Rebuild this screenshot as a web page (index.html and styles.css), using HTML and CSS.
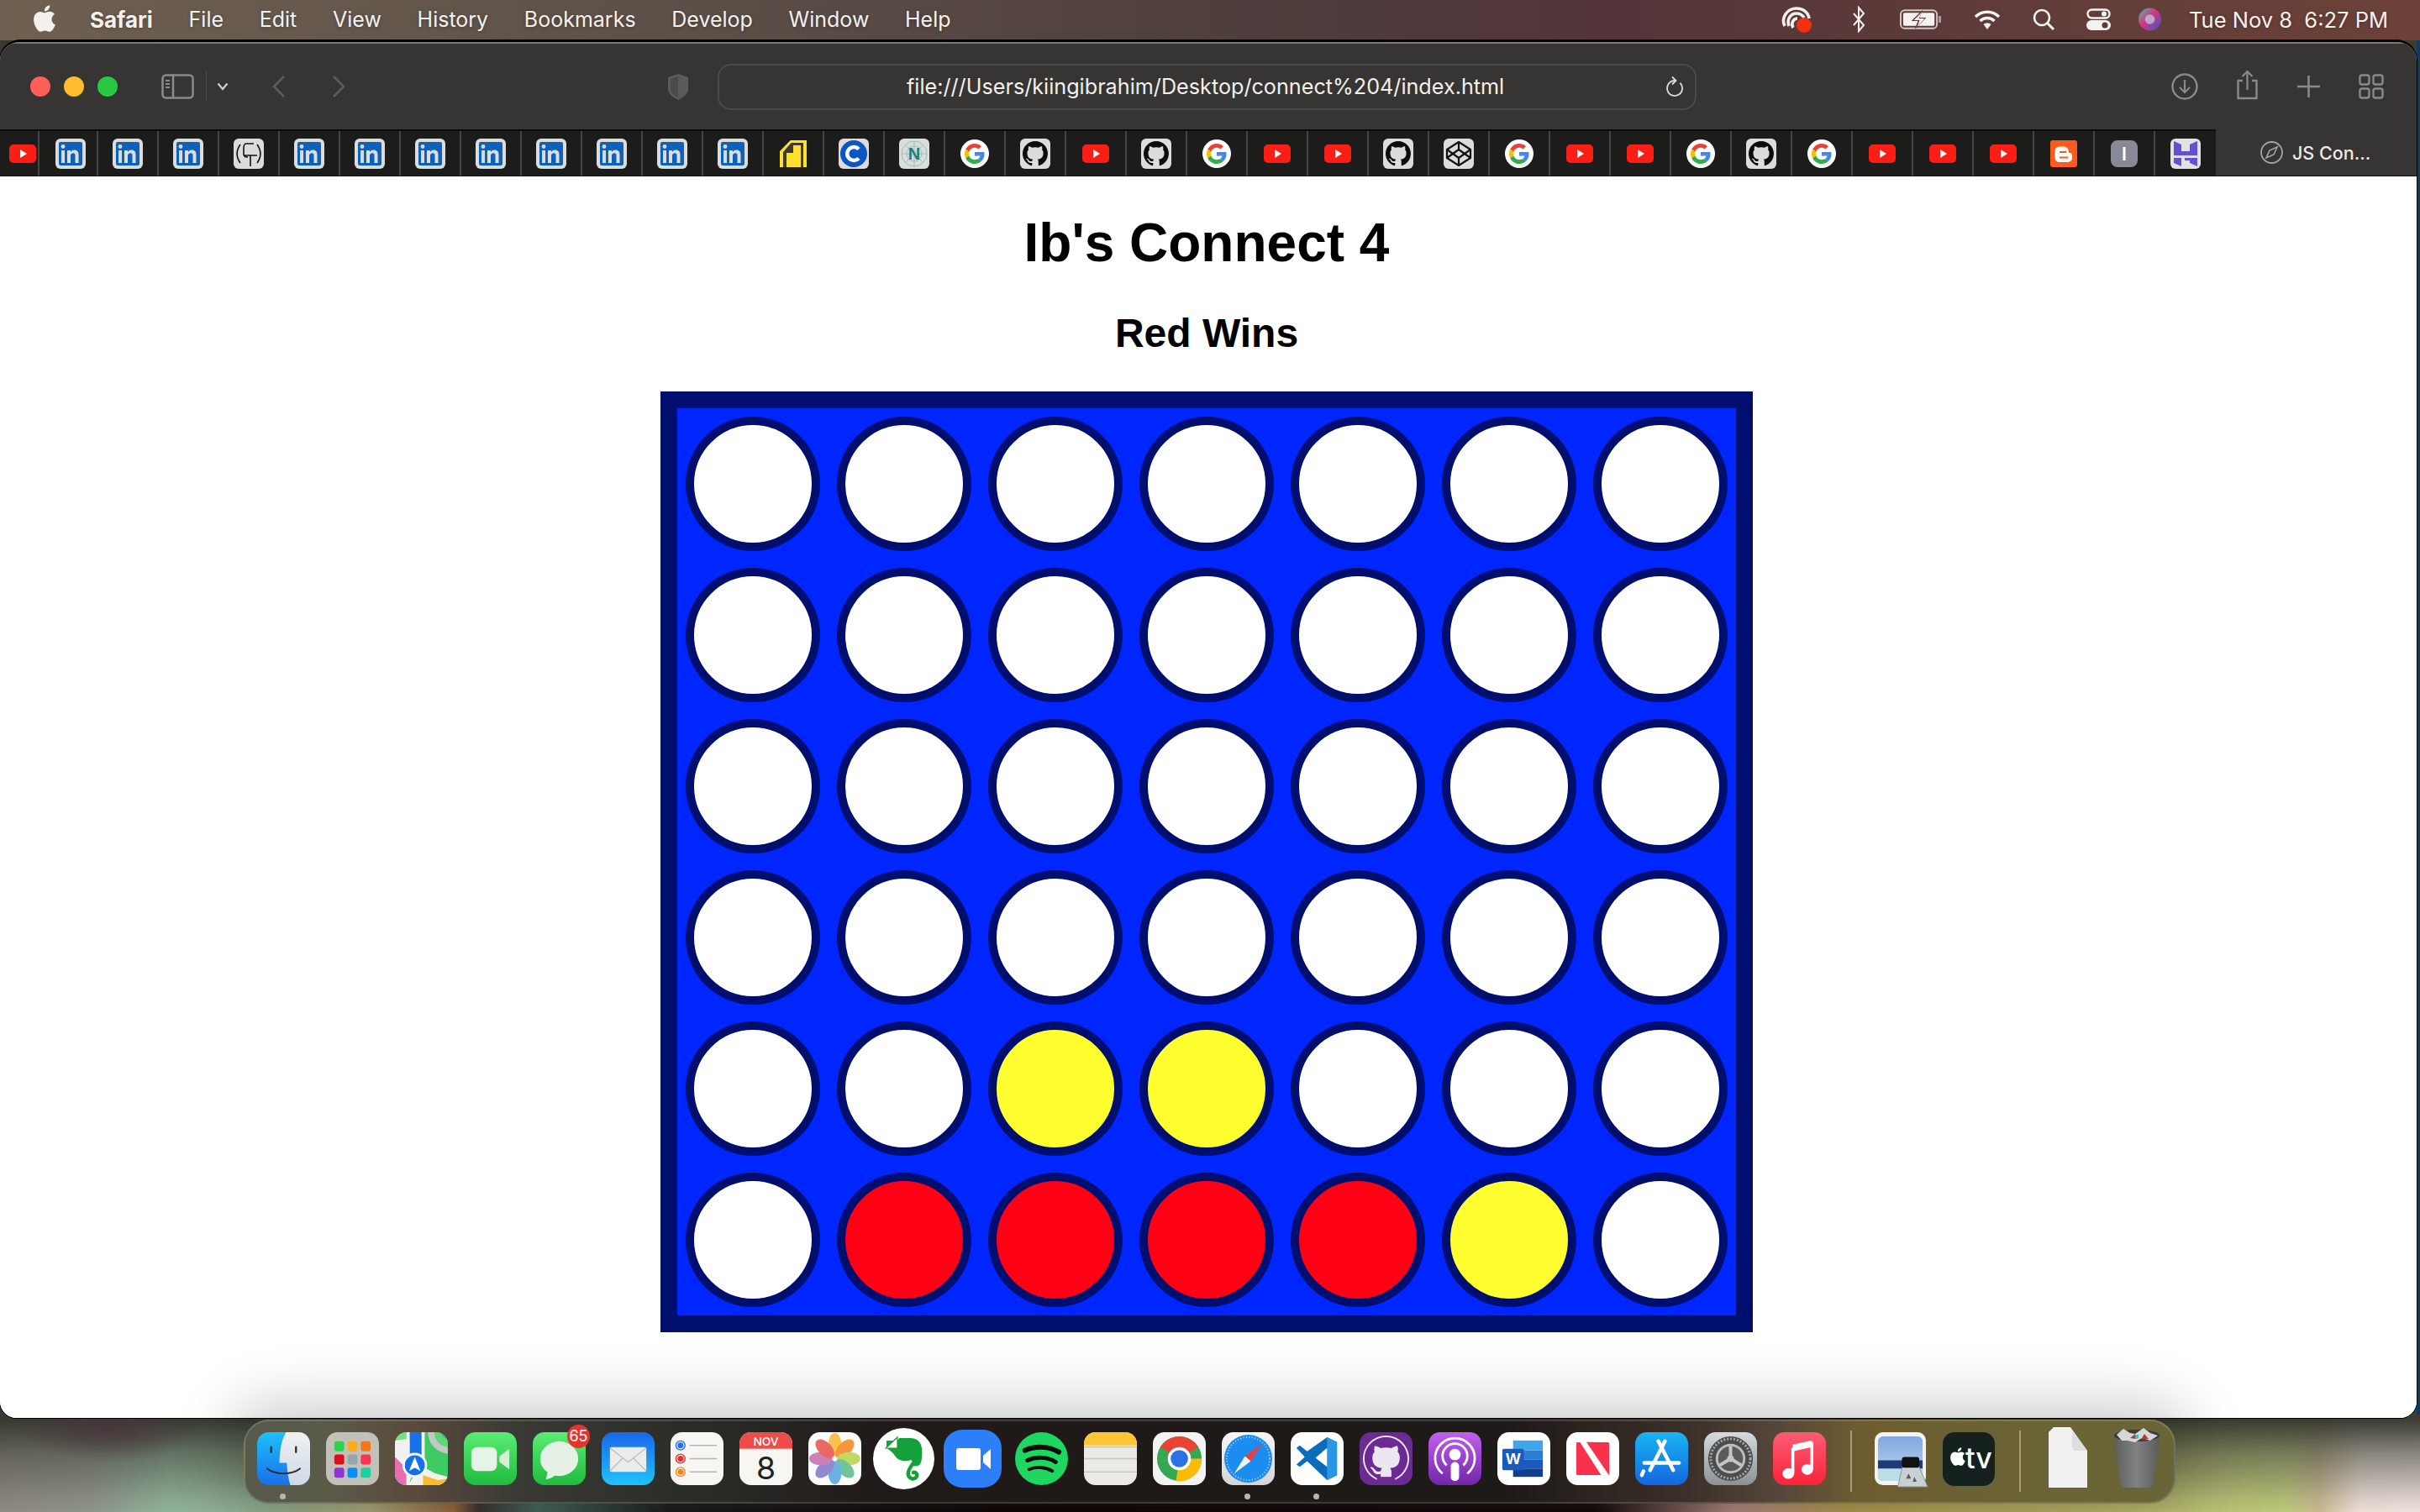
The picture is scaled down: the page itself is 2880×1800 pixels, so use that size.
FILE: index.html
```html
<!DOCTYPE html>
<html lang="en">
<head>
<meta charset="utf-8">
<title>Ib's Connect 4</title>
<link rel="stylesheet" href="styles.css">
</head>
<body>
<svg class="sprites" aria-hidden="true">
  <defs>
    <symbol id="apple" viewBox="0 0 24 24"><path d="M18.71 19.5c-.83 1.24-1.71 2.45-3.05 2.47-1.34.03-1.77-.79-3.29-.79-1.53 0-2 .77-3.27.82-1.31.05-2.3-1.32-3.14-2.53C4.25 17 2.94 12.45 4.7 9.39c.87-1.52 2.43-2.48 4.12-2.51 1.28-.02 2.5.87 3.29.87.78 0 2.26-1.07 3.8-.91.65.03 2.47.26 3.64 1.98-.09.06-2.17 1.28-2.15 3.81.03 3.02 2.65 4.03 2.68 4.04-.03.07-.42 1.44-1.38 2.83M13 3.5c.73-.83 1.94-1.46 2.94-1.5.13 1.17-.34 2.35-1.04 3.19-.69.85-1.83 1.51-2.95 1.42-.15-1.15.41-2.35 1.05-3.11z"/></symbol>
    <symbol id="octo" viewBox="0 0 16 16"><path d="M8 0C3.58 0 0 3.58 0 8c0 3.54 2.29 6.53 5.47 7.59.4.07.55-.17.55-.38 0-.19-.01-.82-.01-1.49-2.01.37-2.53-.49-2.69-.94-.09-.23-.48-.94-.82-1.13-.28-.15-.68-.52-.01-.53.63-.01 1.08.58 1.23.82.72 1.21 1.87.87 2.33.66.07-.52.28-.87.51-1.07-1.78-.2-3.64-.89-3.64-3.95 0-.87.31-1.59.82-2.15-.08-.2-.36-1.02.08-2.12 0 0 .67-.21 2.2.82.64-.18 1.32-.27 2-.27.68 0 1.36.09 2 .27 1.53-1.04 2.2-.82 2.2-.82.44 1.1.16 1.92.08 2.12.51.56.82 1.27.82 2.15 0 3.07-1.87 3.75-3.65 3.95.29.25.54.73.54 1.48 0 1.07-.01 1.93-.01 2.2 0 .21.15.46.55.38A8.013 8.013 0 0016 8c0-4.42-3.58-8-8-8z"/></symbol>
    <symbol id="t-yt" viewBox="0 0 36 36"><rect x="2" y="7" width="32" height="22" rx="5" fill="#fa1e14"/><path d="M15 13l8 5-8 5z" fill="#fff"/></symbol>
    <symbol id="t-in" viewBox="0 0 36 36"><rect width="36" height="36" rx="6" fill="#dcdcdc"/><rect x="4" y="4" width="28" height="28" rx="2" fill="#0b62b8"/><rect x="7" y="14" width="4" height="15" fill="#dcdcdc"/><circle cx="9" cy="9.5" r="2.4" fill="#dcdcdc"/><path d="M14 29V14h4v2c1-1.6 2.600-2.400 4.500-2.400 3.500 0 5 2.300 5 5.800V29h-4v-8.800c0-1.900-.7-3-2.300-3-1.900 0-3.200 1.300-3.200 3.400V29z" fill="#dcdcdc"/></symbol>
    <symbol id="t-gt" viewBox="0 0 36 36"><rect width="36" height="36" rx="6" fill="#dcdcdc"/><g fill="none" stroke="#111" stroke-width="1.600"><path d="M8 7C3 14 3 22 8 29M28 7c5 7 5 15 0 22"/><path d="M24 6H15c-3 0-3 3-3 6v6c0 3 2 4 4 4h1M13 20h15M20 20v13"/></g></symbol>
    <symbol id="t-y" viewBox="0 0 36 36"><path d="M14.700 2H34v32H2V15z" fill="#ffe030"/><path d="M15.500 5H30v29H6V16z" fill="#3a3a36"/><path d="M18 8h9v26H10V17h8z" fill="#ffe030"/></symbol>
    <symbol id="t-c" viewBox="0 0 36 36"><rect width="36" height="36" rx="6" fill="#dcdcdc"/><circle cx="18" cy="18" r="16" fill="#0a56c8"/><path d="M24 12.500a8 8 0 1 0 0 11" fill="none" stroke="#fff" stroke-width="4.500"/></symbol>
    <symbol id="t-n" viewBox="0 0 36 36"><rect width="36" height="36" rx="6" fill="#dcdcdc"/><g fill="none" stroke="#7fb5ad" stroke-width=".7"><circle cx="18" cy="18" r="15"/><circle cx="18" cy="18" r="9"/><path d="M3 18h30M18 3v30M8 8l20 20M28 8L8 28"/></g><text x="18" y="25" class="tile-letter" fill="#1d7f76">N</text></symbol>
    <symbol id="t-g" viewBox="0 0 36 36"><circle cx="18" cy="18" r="17" fill="#fff"/><g transform="translate(6 6) scale(.5)"><path fill="#EA4335" d="M24 9.500c3.540 0 6.710 1.220 9.210 3.600l6.850-6.850C35.900 2.380 30.470 0 24 0 14.620 0 6.510 5.380 2.560 13.220l7.980 6.190C12.430 13.720 17.740 9.500 24 9.500z"/><path fill="#4285F4" d="M46.980 24.550c0-1.570-.15-3.090-.38-4.550H24v9.020h12.940c-.58 2.960-2.260 5.480-4.780 7.180l7.730 6c4.510-4.180 7.090-10.360 7.090-17.65z"/><path fill="#FBBC05" d="M10.530 28.590c-.48-1.450-.76-2.990-.76-4.590s.27-3.140.76-4.590l-7.980-6.190C.92 16.460 0 20.120 0 24c0 3.880.92 7.540 2.560 10.780l7.970-6.190z"/><path fill="#34A853" d="M24 48c6.480 0 11.930-2.130 16.010-5.810l-7.730-6c-2.150 1.450-4.920 2.300-8.280 2.300-6.260 0-11.570-4.220-13.470-9.910l-7.980 6.190C6.510 42.620 14.620 48 24 48z"/></g></symbol>
    <symbol id="t-gh" viewBox="0 0 36 36"><rect width="36" height="36" rx="6" fill="#dcdcdc"/><use href="#octo" x="3" y="3" width="30" height="30" fill="#0c0c0c"/></symbol>
    <symbol id="t-cp" viewBox="0 0 36 36"><rect width="36" height="36" rx="6" fill="#dcdcdc"/><g fill="none" stroke="#111" stroke-width="2.200" stroke-linejoin="round"><path d="M18 4l14 9v10l-14 9-14-9V13z"/><path d="M18 4v9M18 23v9M4 13l14 10 14-10M4 23l14-10 14 10"/></g></symbol>
    <symbol id="t-b" viewBox="0 0 36 36"><rect x="2" y="2" width="32" height="32" rx="3" fill="#f95b1d"/><path d="M13 9.500h5a6 6 0 0 1 6 6V17h1a3 3 0 0 1 3 3v3a5 5 0 0 1-5 5H13a5.500 5.500 0 0 1-5.500-5.500V15a5.500 5.500 0 0 1 5.500-5.500z" fill="#fff"/><rect x="13" y="15" width="8" height="2" fill="#f95b1d"/><rect x="13" y="21.500" width="10" height="2" fill="#f95b1d"/></symbol>
    <symbol id="t-i" viewBox="0 0 36 36"><rect x="2" y="2" width="32" height="32" rx="8" fill="#878a96"/><rect x="16.500" y="10" width="3" height="16" fill="#fff"/></symbol>
    <symbol id="t-h" viewBox="0 0 36 36"><rect width="36" height="36" rx="6" fill="#e2e2e2"/><path d="M4 3l9 4v8h10V7l9-4v17H4zM4 23h9v10l-9-4zM17 23h15v10l-9-4v-3h-6z" fill="#6351cf"/></symbol>
  </defs>
</svg>

<header class="menubar">
  <nav class="menu">
    <svg class="apple"><use href="#apple"/></svg>
    <span class="menu-app">Safari</span>
    <span>File</span><span>Edit</span><span>View</span><span>History</span><span>Bookmarks</span><span>Develop</span><span>Window</span><span>Help</span>
  </nav>
  <div class="status">
    <svg class="st st-cc" viewBox="0 0 40 32"><g fill="none" stroke="#f2f0ee" stroke-width="3.600"><path d="M5 24C0 14 8 3 19 3c8 0 14 5 15 12"/><path d="M10 24C7 16 12 9 19 9c4 0 7 2 9 5"/><path d="M15 26c-3-5 0-11 5-11"/></g><circle cx="28" cy="23" r="9" fill="#f0300f"/></svg>
    <svg class="st st-bt" viewBox="0 0 16 32"><path d="M2 9l12 14-6 7V2l6 7L2 23" fill="none" stroke="#f2f0ee" stroke-width="2"/></svg>
    <svg class="st st-bat" viewBox="0 0 52 24"><rect x="1" y="1" width="44" height="22" rx="5" fill="none" stroke="#cfc9c6" stroke-width="2"/><rect x="47" y="8" width="3" height="8" rx="1" fill="#a89f9b"/><rect x="4" y="4" width="38" height="16" rx="2" fill="#f4f2f0"/><path d="M28 0L14 14h8l-4 10 14-14h-8z" fill="#5f3936"/><path d="M27 3L17 13h7l-3 8 9-10h-7z" fill="#f4f2f0"/></svg>
    <svg class="st st-wifi" viewBox="0 0 32 24"><g fill="none" stroke="#f4f2f0" stroke-width="3.400"><path d="M2 9a20 20 0 0 1 28 0"/><path d="M7.500 14a12 12 0 0 1 17 0"/></g><path d="M11.500 18a6.500 6.500 0 0 1 9 0L16 24z" fill="#f4f2f0"/></svg>
    <svg class="st st-search" viewBox="0 0 27 26"><circle cx="11" cy="11" r="9" fill="none" stroke="#f4f2f0" stroke-width="2.600"/><path d="M17.500 17.500L25 25" stroke="#f4f2f0" stroke-width="3"/></svg>
    <svg class="st st-ctl" viewBox="0 0 29 26"><rect x="1.500" y="1.500" width="26" height="10" rx="5" fill="none" stroke="#f4f2f0" stroke-width="2.400"/><circle cx="21" cy="6.500" r="3" fill="#f4f2f0"/><rect y="14" width="29" height="12" rx="6" fill="#f4f2f0"/><circle cx="22" cy="20" r="3.500" fill="#5f3936"/></svg>
    <svg class="st st-siri" viewBox="0 0 28 28"><defs><linearGradient id="siri" x1="0" y1="0" x2="1" y2="1"><stop offset="0" stop-color="#38c7b0"/><stop offset=".45" stop-color="#d9337f"/><stop offset="1" stop-color="#2a5fc9"/></linearGradient></defs><circle cx="14" cy="14" r="14" fill="url(#siri)"/><circle cx="14" cy="14" r="6" fill="#b9d6e6" opacity=".7"/></svg>
    <span class="clock">Tue Nov 8&nbsp; 6:27 PM</span>
  </div>
</header>

<main class="window">
  <div class="toolbar">
    <div class="lights"><i class="light l-red"></i><i class="light l-yellow"></i><i class="light l-green"></i></div>
    <svg class="tb tb-side" viewBox="0 0 39 30"><rect x="1.500" y="1.500" width="36" height="27" rx="4" fill="none" stroke="#8b8a88" stroke-width="2.500"/><path d="M14 2v26" stroke="#8b8a88" stroke-width="2.500"/><path d="M5 8h5M5 12h5M5 16h5" stroke="#8b8a88" stroke-width="2"/></svg>
    <i class="tb-sep"></i>
    <svg class="tb tb-chev" viewBox="0 0 14 10"><path d="M1.500 1.500L7 8l5.500-6.500" fill="none" stroke="#cfcecc" stroke-width="2.200"/></svg>
    <svg class="tb tb-back" viewBox="0 0 17 28"><path d="M15 2L3 14l12 12" fill="none" stroke="#5d5c5a" stroke-width="2.600"/></svg>
    <svg class="tb tb-fwd" viewBox="0 0 17 28"><path d="M2 2l12 12L2 26" fill="none" stroke="#5d5c5a" stroke-width="2.600"/></svg>
    <svg class="tb tb-shield" viewBox="0 0 26 33"><path d="M13 1l12 4v14c0 6-6 10-12 13C7 29 1 25 1 19V5z" fill="#5a5a58"/><path d="M13 4v25c-4-2-9-5-9-10V7z" fill="#4a4a48"/></svg>
    <div class="address">
      <span class="url">file:///Users/kiingibrahim/Desktop/connect%204/index.html</span>
      <svg class="reload" viewBox="0 0 20 26"><path d="M10 6A9 9 0 1 0 16.400 8.600" fill="none" stroke="#dddcda" stroke-width="1.800"/><path d="M7 1.500L11.500 6 7 10.500" fill="none" stroke="#dddcda" stroke-width="1.800"/></svg>
    </div>
    <svg class="tb tb-dl" viewBox="0 0 32 32"><circle cx="16" cy="16" r="14.500" fill="none" stroke="#8b8a88" stroke-width="2.400"/><path d="M16 8v15M10 17l6 6 6-6" fill="none" stroke="#8b8a88" stroke-width="2.200"/></svg>
    <svg class="tb tb-share" viewBox="0 0 27 36"><path d="M8 13H2.500v21h22V13H19" fill="none" stroke="#8b8a88" stroke-width="2.400" stroke-linejoin="round"/><path d="M13.500 24V2M7.500 8l6-6 6 6" fill="none" stroke="#8b8a88" stroke-width="2.200"/></svg>
    <svg class="tb tb-plus" viewBox="0 0 27 26"><path d="M13.500 0v26M0 13h27" stroke="#8b8a88" stroke-width="2.600"/></svg>
    <svg class="tb tb-grid" viewBox="0 0 30 30"><g fill="none" stroke="#8b8a88" stroke-width="2.400"><rect x="1.500" y="1.500" width="11" height="11" rx="2.500"/><rect x="17.500" y="1.500" width="11" height="11" rx="2.500"/><rect x="1.500" y="17.500" width="11" height="11" rx="2.500"/><rect x="17.500" y="17.500" width="11" height="11" rx="2.500"/></g></svg>
  </div>

  <div class="tabbar">
    <div class="tabs">
      <div class="tab tab-first"><svg class="fav"><use href="#t-yt"/></svg></div>
      <div class="tab tab-second"><svg class="fav"><use href="#t-in"/></svg></div>
      <div class="tab"><svg class="fav"><use href="#t-in"/></svg></div>
      <div class="tab"><svg class="fav"><use href="#t-in"/></svg></div>
      <div class="tab"><svg class="fav"><use href="#t-gt"/></svg></div>
      <div class="tab"><svg class="fav"><use href="#t-in"/></svg></div>
      <div class="tab"><svg class="fav"><use href="#t-in"/></svg></div>
      <div class="tab"><svg class="fav"><use href="#t-in"/></svg></div>
      <div class="tab"><svg class="fav"><use href="#t-in"/></svg></div>
      <div class="tab"><svg class="fav"><use href="#t-in"/></svg></div>
      <div class="tab"><svg class="fav"><use href="#t-in"/></svg></div>
      <div class="tab"><svg class="fav"><use href="#t-in"/></svg></div>
      <div class="tab"><svg class="fav"><use href="#t-in"/></svg></div>
      <div class="tab"><svg class="fav"><use href="#t-y"/></svg></div>
      <div class="tab"><svg class="fav"><use href="#t-c"/></svg></div>
      <div class="tab"><svg class="fav"><use href="#t-n"/></svg></div>
      <div class="tab"><svg class="fav"><use href="#t-g"/></svg></div>
      <div class="tab"><svg class="fav"><use href="#t-gh"/></svg></div>
      <div class="tab"><svg class="fav"><use href="#t-yt"/></svg></div>
      <div class="tab"><svg class="fav"><use href="#t-gh"/></svg></div>
      <div class="tab"><svg class="fav"><use href="#t-g"/></svg></div>
      <div class="tab"><svg class="fav"><use href="#t-yt"/></svg></div>
      <div class="tab"><svg class="fav"><use href="#t-yt"/></svg></div>
      <div class="tab"><svg class="fav"><use href="#t-gh"/></svg></div>
      <div class="tab"><svg class="fav"><use href="#t-cp"/></svg></div>
      <div class="tab"><svg class="fav"><use href="#t-g"/></svg></div>
      <div class="tab"><svg class="fav"><use href="#t-yt"/></svg></div>
      <div class="tab"><svg class="fav"><use href="#t-yt"/></svg></div>
      <div class="tab"><svg class="fav"><use href="#t-g"/></svg></div>
      <div class="tab"><svg class="fav"><use href="#t-gh"/></svg></div>
      <div class="tab"><svg class="fav"><use href="#t-g"/></svg></div>
      <div class="tab"><svg class="fav"><use href="#t-yt"/></svg></div>
      <div class="tab"><svg class="fav"><use href="#t-yt"/></svg></div>
      <div class="tab"><svg class="fav"><use href="#t-yt"/></svg></div>
      <div class="tab"><svg class="fav"><use href="#t-b"/></svg></div>
      <div class="tab"><svg class="fav"><use href="#t-i"/></svg></div>
      <div class="tab"><svg class="fav"><use href="#t-h"/></svg></div>
    </div>
    <div class="tab-active">
      <svg class="compass" viewBox="0 0 27 27"><circle cx="13.500" cy="13.500" r="12.500" fill="none" stroke="#a5a4a2" stroke-width="1.800"/><path d="M20 7l-9 4-4 9 9-4z" fill="none" stroke="#a5a4a2" stroke-width="1.600"/></svg>
      <span>JS Con...</span>
    </div>
  </div>

  <section class="page">
    <h1 class="title">Ib's Connect 4</h1>
    <h2 class="status-line">Red Wins</h2>
    <div class="board">
      <div class="hole"></div><div class="hole"></div><div class="hole"></div><div class="hole"></div><div class="hole"></div><div class="hole"></div><div class="hole"></div>
      <div class="hole"></div><div class="hole"></div><div class="hole"></div><div class="hole"></div><div class="hole"></div><div class="hole"></div><div class="hole"></div>
      <div class="hole"></div><div class="hole"></div><div class="hole"></div><div class="hole"></div><div class="hole"></div><div class="hole"></div><div class="hole"></div>
      <div class="hole"></div><div class="hole"></div><div class="hole"></div><div class="hole"></div><div class="hole"></div><div class="hole"></div><div class="hole"></div>
      <div class="hole"></div><div class="hole"></div><div class="hole yellow"></div><div class="hole yellow"></div><div class="hole"></div><div class="hole"></div><div class="hole"></div>
      <div class="hole"></div><div class="hole red"></div><div class="hole red"></div><div class="hole red"></div><div class="hole red"></div><div class="hole yellow"></div><div class="hole"></div>
    </div>
  </section>
</main>

<footer class="dock">
  <div class="app running"><svg viewBox="0 0 64 64"><defs><linearGradient id="fa" x1="0" y1="0" x2="0" y2="1"><stop offset="0" stop-color="#1fc0fb"/><stop offset="1" stop-color="#1a6fe8"/></linearGradient><linearGradient id="fb" x1="0" y1="0" x2="0" y2="1"><stop offset="0" stop-color="#f0f1f3"/><stop offset="1" stop-color="#cfd9e6"/></linearGradient></defs><rect width="64" height="64" rx="14" fill="url(#fa)"/><path d="M35 0h15a14 14 0 0 1 14 14v36a14 14 0 0 1-14 14H40c-2-8-4-17-4-27h-9c0-15 3-29 8-37z" fill="url(#fb)"/><path d="M17 18v6M47 18v6" stroke="#2a3038" stroke-width="2.400" stroke-linecap="round"/><path d="M12 44c10 8 30 8 40 0" fill="none" stroke="#23282e" stroke-width="1.800" stroke-linecap="round"/></svg></div>
  <div class="app"><svg viewBox="0 0 64 64"><rect width="64" height="64" rx="14" fill="#c2c1b9"/><g><rect x="10" y="11" width="12" height="12" rx="3" fill="#33d04f"/><rect x="26" y="11" width="12" height="12" rx="3" fill="#fdab1d"/><rect x="42" y="11" width="12" height="12" rx="3" fill="#f07a1b"/><rect x="10" y="27" width="12" height="12" rx="3" fill="#d7121e"/><rect x="26" y="27" width="12" height="12" rx="3" fill="#98a6ac"/><rect x="42" y="27" width="12" height="12" rx="3" fill="#f9364f"/><rect x="10" y="43" width="12" height="12" rx="3" fill="#8e35d0"/><rect x="26" y="43" width="12" height="12" rx="3" fill="#0a8ef5"/><rect x="42" y="43" width="12" height="12" rx="3" fill="#1fcfa0"/></g></svg></div>
  <div class="app"><svg viewBox="0 0 64 64"><clipPath id="mc"><rect width="64" height="64" rx="14"/></clipPath><g clip-path="url(#mc)"><rect width="64" height="64" fill="#3ecb63"/><path d="M0 0h16v10L0 12z" fill="#6fe27f"/><path d="M0 10l16-2 14 22L16 64H0z" fill="#f1f1ef"/><path d="M0 30l14 14v20H0z" fill="#e56fb0"/><path d="M30 40l34 18v6H16z" fill="#f1f1ef"/><path d="M34 50h16l14 4v10H34z" fill="#f1f1ef"/><path d="M34 64V52l18 6 12-2v8z" fill="#f7bb2b"/><path d="M14 0h4v64h-4zM32 0h4v40h-4z" fill="#f1f1ef"/><path d="M18 0h14v36H18z" fill="#1572e8"/><path d="M40 0c0 14 10 24 24 26v-8C54 16 48 10 48 0z" fill="#c5c6c6"/><path d="M48 0c0 10 6 16 16 18V8C58 8 56 4 56 0z" fill="#5ed77a"/><circle cx="24" cy="40" r="15" fill="#f4f4f2"/><circle cx="24" cy="40" r="12" fill="#1170ea"/><path d="M24 30l7 17-7-4-7 4z" fill="#fff"/></g></svg></div>
  <div class="app"><svg viewBox="0 0 64 64"><defs><linearGradient id="fc" x1="0" y1="0" x2="0" y2="1"><stop offset="0" stop-color="#5bec74"/><stop offset="1" stop-color="#1fbb3f"/></linearGradient></defs><rect width="64" height="64" rx="14" fill="url(#fc)"/><rect x="9" y="18" width="31" height="29" rx="7" fill="#e8f3e8"/><path d="M43 29l12-9v25l-12-9z" fill="#d8ecd8"/></svg></div>
  <div class="app"><svg viewBox="0 0 64 64"><rect width="64" height="64" rx="14" fill="url(#fc)"/><ellipse cx="32" cy="32" rx="23" ry="21" fill="#e6f1e6"/><path d="M18 48l-2 9c6-1 10-3 13-7z" fill="#e6f1e6"/></svg><span class="badge">65</span></div>
  <div class="app"><svg viewBox="0 0 64 64"><defs><linearGradient id="ma" x1="0" y1="0" x2="0" y2="1"><stop offset="0" stop-color="#1a66e8"/><stop offset="1" stop-color="#1fc3fb"/></linearGradient></defs><rect width="64" height="64" rx="14" fill="url(#ma)"/><rect x="10" y="18" width="44" height="30" rx="2" fill="#ececec"/><path d="M10 19l22 17 22-17M10 47l16-16M54 47L38 31" fill="none" stroke="#bcbcbc" stroke-width="1.200"/></svg></div>
  <div class="app"><svg viewBox="0 0 64 64"><rect width="64" height="64" rx="14" fill="#f7f6f3"/><g fill="none" stroke-width="1.400"><circle cx="12" cy="16" r="5.500" stroke="#1672f0"/><circle cx="12" cy="32" r="5.500" stroke="#ee2b2b"/><circle cx="12" cy="48" r="5.500" stroke="#f6861c"/></g><circle cx="12" cy="16" r="3.500" fill="#1672f0"/><circle cx="12" cy="32" r="3.500" fill="#ee2b2b"/><circle cx="12" cy="48" r="3.500" fill="#f6861c"/><path d="M23 16h33M23 32h33M23 48h33" stroke="#b5b5b3" stroke-width="1.600"/></svg></div>
  <div class="app"><svg viewBox="0 0 64 64"><clipPath id="cc"><rect width="64" height="64" rx="14"/></clipPath><g clip-path="url(#cc)"><rect width="64" height="64" fill="#f7f6f3"/><rect width="64" height="20" fill="#ee4b4b"/></g><text x="32" y="16" class="cal-month">NOV</text><text x="32" y="57" class="cal-day">8</text></svg></div>
  <div class="app"><svg viewBox="0 0 64 64"><rect width="64" height="64" rx="14" fill="#fbfbfb"/><g transform="translate(32 32)" opacity=".85"><ellipse cy="-17" rx="8" ry="14" fill="#f8b830"/><ellipse cy="-17" rx="8" ry="14" fill="#f6861c" transform="rotate(45)"/><ellipse cy="-17" rx="8" ry="14" fill="#b8d34a" transform="rotate(90)"/><ellipse cy="-17" rx="8" ry="14" fill="#5bb98c" transform="rotate(135)"/><ellipse cy="-17" rx="8" ry="14" fill="#52a5dd" transform="rotate(180)"/><ellipse cy="-17" rx="8" ry="14" fill="#8176c7" transform="rotate(225)"/><ellipse cy="-17" rx="8" ry="14" fill="#c46bac" transform="rotate(270)"/><ellipse cy="-17" rx="8" ry="14" fill="#e84f48" transform="rotate(315)"/></g></svg></div>
  <div class="app app-wide"><svg viewBox="0 0 73 73"><circle cx="36.500" cy="36.500" r="36.500" fill="#fff"/><path d="M31 12h13c8 0 13 4 14 12 1 8 0 16-2 19-2 3-7 3-9 1l-1-6-5 1c-6 1-12-1-15-6-3-5-9-8-10-10v-8h11c2 0 4-2 4-3z" fill="#14a03a"/><path d="M47 43c-3 4-6 9-5 13 1 4 6 6 9 3 3-3 0-7-3-6" fill="none" stroke="#14a03a" stroke-width="4.500" stroke-linecap="round"/><path d="M15 24L29 11v13z" fill="#fff" stroke="#14a03a" stroke-width="1.200"/></svg></div>
  <div class="app app-zoom"><svg viewBox="0 0 69 69"><rect width="69" height="69" rx="22" fill="#2d7ff9"/><rect x="15" y="22" width="29" height="26" rx="3" fill="#fff"/><path d="M47 31l9-8v24l-9-8z" fill="#fff"/></svg></div>
  <div class="app"><svg viewBox="0 0 64 64"><ellipse cx="32" cy="32" rx="32" ry="32" fill="#1ed760"/><g fill="none" stroke="#0c0c0c" stroke-linecap="round"><path d="M12 22c13-6 29-5 41 2" stroke-width="6"/><path d="M15 34c11-5 25-4 34 2" stroke-width="5"/><path d="M17 45c9-4 20-3 28 2" stroke-width="4"/></g></svg></div>
  <div class="app"><svg viewBox="0 0 64 64"><clipPath id="nc"><rect width="64" height="64" rx="14"/></clipPath><g clip-path="url(#nc)"><rect width="64" height="64" fill="#eceae5"/><rect width="64" height="16" fill="#fcc635"/><path d="M0 18h64M0 32h64M0 48h64" stroke="#c9c7c2" stroke-width="1.400"/></g></svg></div>
  <div class="app"><svg viewBox="0 0 64 64"><rect width="64" height="64" rx="14" fill="#f3f3f3"/><circle cx="32" cy="32" r="27" fill="#34a853"/><path d="M32 32L9 18A27 27 0 0 1 55 18z" fill="#ea4335"/><path d="M32 32h27A27 27 0 0 1 28 59z" fill="#fbbc05"/><circle cx="32" cy="32" r="14" fill="#fff"/><circle cx="32" cy="32" r="10.500" fill="#2b72e6"/></svg></div>
  <div class="app running"><svg viewBox="0 0 64 64"><defs><linearGradient id="sa" x1="0" y1="0" x2="0" y2="1"><stop offset="0" stop-color="#f7f7f7"/><stop offset="1" stop-color="#d5d5d5"/></linearGradient></defs><rect width="64" height="64" rx="14" fill="url(#sa)"/><circle cx="32" cy="32" r="29" fill="#1c8df0"/><circle cx="32" cy="32" r="26" fill="none" stroke="#bcdcf7" stroke-width="2" stroke-dasharray="1 2.500"/><path d="M49 14L28 29l7 6z" fill="#f23c3c"/><path d="M15 50l13-21 7 6z" fill="#f2f2f2"/></svg></div>
  <div class="app running"><svg viewBox="0 0 64 64"><rect width="64" height="64" rx="14" fill="#fff"/><path d="M44 6l12 6v40l-12 6-24-23-9 7-4-3 10-9L7 19l4-3 9 7z" fill="#0a6dbb"/><path d="M44 6v52l12-6V12z" fill="#2a97e6"/><path d="M44 19L30 31l14 11z" fill="#fff"/></svg></div>
  <div class="app"><svg viewBox="0 0 64 64"><rect width="64" height="64" rx="14" fill="#6b2b93"/><circle cx="32" cy="32" r="28" fill="#ece6f0"/><use href="#octo" x="6" y="6" width="52" height="52" fill="#6b2b93"/><rect x="21" y="54" width="22" height="10" fill="#6b2b93"/></svg></div>
  <div class="app"><svg viewBox="0 0 64 64"><defs><linearGradient id="po" x1="0" y1="0" x2="0" y2="1"><stop offset="0" stop-color="#c260ee"/><stop offset="1" stop-color="#7027a8"/></linearGradient></defs><rect width="64" height="64" rx="14" fill="url(#po)"/><g fill="none" stroke="#fff" stroke-width="2.800"><path d="M17 50a24 24 0 1 1 30 0"/><path d="M22 40a15 15 0 1 1 20 0"/></g><circle cx="32" cy="27" r="7" fill="#fff"/><rect x="27" y="36" width="10" height="23" rx="5" fill="#fff"/></svg></div>
  <div class="app"><svg viewBox="0 0 64 64"><rect width="64" height="64" rx="14" fill="#fff"/><rect x="19" y="10" width="36" height="12" fill="#41a5ee"/><rect x="19" y="22" width="36" height="11" fill="#2b7cd3"/><rect x="19" y="33" width="36" height="11" fill="#185abd"/><rect x="19" y="44" width="36" height="10" fill="#103f91"/><rect x="6" y="20" width="26" height="26" rx="2" fill="#185abd"/><text x="19" y="39" class="word-letter">W</text></svg></div>
  <div class="app"><svg viewBox="0 0 64 64"><clipPath id="ne"><rect x="12" y="12" width="40" height="40" rx="2"/></clipPath><rect width="64" height="64" rx="14" fill="#fff"/><g clip-path="url(#ne)"><rect x="12" y="12" width="40" height="40" fill="#f8324d"/><path d="M14 8l12 0 30 42v8H46z" fill="#fff"/><path d="M23 10l8 0 28 40-6 4z" fill="#f8324d"/></g></svg></div>
  <div class="app"><svg viewBox="0 0 64 64"><defs><linearGradient id="as" x1="0" y1="0" x2="0" y2="1"><stop offset="0" stop-color="#1ab5f5"/><stop offset="1" stop-color="#1566de"/></linearGradient></defs><rect width="64" height="64" rx="14" fill="url(#as)"/><g stroke="#fff" stroke-width="4.500" stroke-linecap="round"><path d="M36 11L18 46M28 11l18 35M11 37h42M10 47l-2 5"/></g></svg></div>
  <div class="app"><svg viewBox="0 0 64 64"><defs><linearGradient id="se" x1="0" y1="0" x2="0" y2="1"><stop offset="0" stop-color="#d5dadc"/><stop offset="1" stop-color="#8d9193"/></linearGradient></defs><rect width="64" height="64" rx="14" fill="url(#se)"/><circle cx="32" cy="32" r="27" fill="#4b4c4d"/><circle cx="32" cy="32" r="24" fill="none" stroke="#a8a9aa" stroke-width="3" stroke-dasharray="2 2"/><circle cx="32" cy="32" r="18" fill="#bcbdbe"/><circle cx="32" cy="32" r="15" fill="#5a5b5c"/><path d="M32 32V17M32 32L19 40M32 32l13 8" stroke="#c6c7c8" stroke-width="4"/><circle cx="32" cy="32" r="4" fill="#c6c7c8"/></svg></div>
  <div class="app"><svg viewBox="0 0 64 64"><defs><linearGradient id="mu" x1="0" y1="0" x2="0" y2="1"><stop offset="0" stop-color="#fb5c74"/><stop offset="1" stop-color="#fa233b"/></linearGradient></defs><rect width="64" height="64" rx="14" fill="url(#mu)"/><path d="M24 19l23-5v31" fill="none" stroke="#fff" stroke-width="3.600"/><path d="M24 19v31" stroke="#fff" stroke-width="3.600"/><path d="M24 15l23-5v8l-23 5z" fill="#fff"/><ellipse cx="18.500" cy="50" rx="7" ry="6.500" fill="#fff"/><ellipse cx="41.500" cy="45" rx="7" ry="6.500" fill="#fff"/></svg></div>
  <i class="dock-sep"></i>
  <div class="app app-preview"><svg viewBox="0 0 63 66"><defs><linearGradient id="sk" x1="0" y1="0" x2="0" y2="1"><stop offset="0" stop-color="#7fa8e4"/><stop offset="1" stop-color="#c3d6ea"/></linearGradient></defs><rect width="62" height="64" rx="10" fill="#f3f3f1"/><rect x="4" y="5" width="54" height="54" rx="6" fill="url(#sk)"/><rect x="4" y="34" width="54" height="11" fill="#1d3b78"/><path d="M4 44h54v10a5 5 0 0 1-5 5H9a5 5 0 0 1-5-5z" fill="#bcdce8"/><path d="M28 66l6-26h19l11 26z" fill="#c9d1d4" stroke="#8a9194"/><rect x="33" y="30" width="21" height="13" rx="3" fill="#111"/><path d="M38 56l3-6 3 6zM46 60l2-6 3 6z" fill="#565d60"/></svg></div>
  <div class="app app-tv"><svg viewBox="0 0 62 64"><rect width="62" height="64" rx="14" fill="#14211f"/><use href="#apple" x="5" y="14" width="26" height="30" fill="#fff"/><text x="43" y="43" class="tv-text">tv</text></svg></div>
  <i class="dock-sep dock-sep-two"></i>
  <div class="app app-file"><svg viewBox="0 0 46 72"><path d="M6 0h20l20 28v44H0V6z" fill="#f1f1f1"/><path d="M28 5l18 23H32c-3 0-4-2-4-5z" fill="#dedede"/></svg></div>
  <div class="app app-trash"><svg viewBox="0 0 56 72"><defs><linearGradient id="tr" x1="0" y1="0" x2="1" y2="0"><stop offset="0" stop-color="#5e5f60"/><stop offset=".5" stop-color="#808182"/><stop offset="1" stop-color="#5a5b5c"/></linearGradient></defs><path d="M1 9l7 56q1 7 8 7h24q7 0 8-7l7-56z" fill="url(#tr)"/><ellipse cx="28" cy="10" rx="27" ry="7" fill="#3b3a3a"/><path d="M4 9l8-7 8 5 6 1 10-7 8 6 9 3-9 6-10-3-8 5-10-2-6 0z" fill="#d7d7d7"/><path d="M20 13l6-5 2 6zM33 15l4-7 5 6z" fill="#b53c2c"/><path d="M26 9l4 0 0 4-4 1z" fill="#2ec4c0"/></svg></div>
</footer>
</body>
</html>
```

FILE: styles.css
```css
* { box-sizing: border-box; }
html, body { margin: 0; padding: 0; }
body {
  width: 2880px;
  height: 1800px;
  overflow: hidden;
  display: flex;
  flex-direction: column;
  font-family: Inter, "Liberation Sans", sans-serif;
  background:
    linear-gradient(#123a5c, #123a5c) right top / 4px 1684px no-repeat,
    radial-gradient(ellipse 110px 40px at 130px 1700px, rgba(72, 52, 58, .8), transparent 100%),
    linear-gradient(180deg, rgba(52, 54, 46, .96) 1690px, rgba(70, 72, 62, .6) 1730px, rgba(90, 90, 80, .12) 1785px, transparent 1800px),
    linear-gradient(90deg, #8e8880 0, #8d9488 110px, #8fb39a 200px, #90ae92 300px, #a8a878 440px, #96683e 540px, #3a3230 570px, #46685a 640px, #1c1c1a 800px, #0e0605 1200px, #150b0a 1900px, #b08680 2060px, #b09a4e 2200px, #b9bd70 2590px, #bcc87a 2720px, #c8b890 2760px, #ecdfd8 2810px, #eee2dc 2880px);
}
.sprites { position: absolute; width: 0; height: 0; }

.menubar {
  height: 48px;
  flex: none;
  display: flex;
  justify-content: space-between;
  align-items: center;
  padding-bottom: 2px;
  background: linear-gradient(90deg, #6f6050 0, #5c5048 800px, #4e3d3c 1500px, #53353a 1900px, #6c4238 2880px);
  color: #f3f1ee;
  font-size: 25px;
  text-shadow: 0 1px 4px rgba(0, 0, 0, .3);
}
.menu { display: flex; align-items: center; gap: 42.700px; padding-left: 34px; }
.apple { width: 38px; height: 38px; fill: #f3f1ee; margin-right: -7.700px; margin-top: -3px; }
.menu-app { font-weight: 700; font-size: 26px; }
.status { display: flex; align-items: center; padding-right: 38px; }
.st { display: block; flex: none; }
.st-cc { width: 40px; height: 32px; margin-right: 45px; }
.st-bt { width: 16px; height: 32px; margin-right: 41px; }
.st-bat { width: 51px; height: 24px; margin-right: 37px; }
.st-wifi { width: 32px; height: 24px; margin-right: 38px; }
.st-search { width: 27px; height: 26px; margin-right: 37px; }
.st-ctl { width: 29px; height: 26px; margin-right: 33px; }
.st-siri { width: 27px; height: 28px; margin-right: 33px; }
.clock { white-space: nowrap; font-size: 25.500px; }

.window {
  flex: none;
  width: 2876px;
  height: 1640px;
  border-top: 2px solid #000;
  border-radius: 24px 24px 20px 20px;
  overflow: hidden;
  display: flex;
  flex-direction: column;
  background: #fff;
  box-shadow: 0 0 0 1px #000;
}

.toolbar {
  height: 104px;
  flex: none;
  display: flex;
  align-items: center;
  padding-left: 36px;
  background: #363533;
  border-top: 2px solid #7a7976;
}
.lights { display: flex; gap: 16px; margin-right: 52px; }
.light { width: 24px; height: 24px; border-radius: 50%; display: block; }
.l-red { background: #ff5f57; }
.l-yellow { background: #febc2e; }
.l-green { background: #28c840; }
.tb { display: block; flex: none; }
.tb-side { width: 39px; height: 30px; margin-right: 14px; }
.tb-sep { width: 1px; height: 36px; background: #4c4b49; margin-right: 12px; }
.tb-chev { width: 14px; height: 10px; margin-right: 51px; }
.tb-back { width: 17px; height: 28px; margin-right: 55px; }
.tb-fwd { width: 17px; height: 28px; margin-right: 382px; }
.tb-shield { width: 26px; height: 33px; margin-right: 34px; }
.address {
  width: 1165px;
  height: 55px;
  flex: none;
  border: 2px solid #4b4a48;
  border-radius: 16px;
  display: flex;
  align-items: center;
  margin-right: 565px;
  padding-left: 223px;
}
.url { color: #f1f0ee; font-size: 25.200px; white-space: nowrap; flex: none; width: 712px; }
.reload { width: 20px; height: 26px; margin-left: 192px; flex: none; }
.tb-dl { width: 32px; height: 32px; margin-right: 45px; }
.tb-share { width: 27px; height: 36px; margin-right: 46px; margin-top: -4px; }
.tb-plus { width: 27px; height: 26px; margin-right: 46px; }
.tb-grid { width: 30px; height: 30px; }

.tabbar {
  height: 56px;
  flex: none;
  display: flex;
  background: #363533;
  border-bottom: 1px solid #111;
}
.tabs {
  display: flex;
  width: 2637px;
  flex: none;
  background: #1c1c1a;
  border-top: 2px solid #0d0d0c;
}
.tab {
  width: 72px;
  flex: none;
  display: flex;
  align-items: center;
  justify-content: center;
  border-right: 2px solid #454543;
}
.tab-first { width: 47px; justify-content: flex-end; }
.tab-second { width: 70px; padding-left: 6px; }
.tab:last-child { border-right: 0; }
.fav { width: 36px; height: 36px; display: block; }
.tile-letter { font: 700 20px "Liberation Sans", sans-serif; text-anchor: middle; }
.tab-active {
  flex: 1;
  display: flex;
  align-items: center;
  gap: 11px;
  padding-left: 53px;
  color: #ecebe9;
  font-size: 21.500px;
  font-weight: 500;
  white-space: nowrap;
}
.compass { width: 27px; height: 27px; flex: none; }

.page { flex: 1; padding-right: 4px; display: flex; flex-direction: column; align-items: center; background: #fff; color: #000; font-family: "Liberation Sans", Arial, sans-serif; }
.title { margin: 42px 0 43px; font-size: 64px; font-weight: 700; line-height: 74px; }
.status-line { margin: 0 0 42px; font-size: 48px; font-weight: 700; line-height: 55px; }
.board {
  width: 1300px;
  height: 1120px;
  flex: none;
  display: grid;
  grid-template-columns: repeat(7, 180px);
  grid-auto-rows: 180px;
  background: #0026ff;
  border: 20px solid #000e6e;
}
.hole { margin: 10px; border: 10px solid #000e6e; border-radius: 50%; background: #fff; }
.hole.red { background: #ff0015; }
.hole.yellow { background: #ffff30; }

.dock {
  flex: none;
  align-self: flex-start;
  position: relative;
  display: flex;
  align-items: flex-start;
  gap: 19px;
  width: 2299px;
  height: 100px;
  margin: 2px 0 0 290px;
  padding: 13px 0 0 14px;
  border: 2px solid rgba(255, 255, 255, .14);
  border-radius: 30px;
  background: linear-gradient(90deg, #565a4c 0, #5b5a48 100px, #5a4a3c 200px, #3a3a34 320px, #2b2d28 520px, #201a18 760px, #1e1a18 1500px, #3c302a 1720px, #54463a 1820px, #6e5c30 1920px, #6a6335 2100px, #696538 2299px);
  box-shadow: 0 -4px 70px 16px rgba(0, 0, 0, .2);
}
.app { width: 63px; height: 63px; flex: none; position: relative; }
.app svg { display: block; width: 100%; height: 100%; overflow: visible; }
.app.running::after {
  content: "";
  position: absolute;
  left: 27px;
  top: 73px;
  width: 7px;
  height: 7px;
  border-radius: 50%;
  background: #b9b6b0;
}
.app-wide { width: 73px; height: 73px; margin: -5px -5px 0; }
.app-zoom { width: 69px; height: 69px; margin: -3px -3px 0; }
.app-preview { width: 62px; height: 65px; }
.app-tv { width: 62px; height: 64px; }
.app-file { width: 46px; height: 72px; margin-top: -6px; }
.app-trash { width: 56px; height: 72px; margin: -6px 0 0 12px; }
.badge {
  position: absolute;
  left: 41px;
  top: -9px;
  width: 27px;
  height: 28px;
  border-radius: 50%;
  background: #e8322e;
  color: #fff;
  font-size: 18px;
  line-height: 28px;
  text-align: center;
}
.dock-sep { width: 2px; height: 73px; flex: none; margin: -2px 8px 0 10px; background: rgba(220, 205, 170, .55); }
.dock-sep-two { margin: -2px 14px 0 10px; }
.cal-month { font: 500 14px Inter, sans-serif; fill: #fff; text-anchor: middle; }
.cal-day { font: 400 38px Inter, sans-serif; fill: #222; text-anchor: middle; }
.word-letter { font: 700 19px "Liberation Sans", sans-serif; fill: #fff; text-anchor: middle; }
.tv-text { font: 500 34px Inter, sans-serif; fill: #fff; text-anchor: middle; }
```
